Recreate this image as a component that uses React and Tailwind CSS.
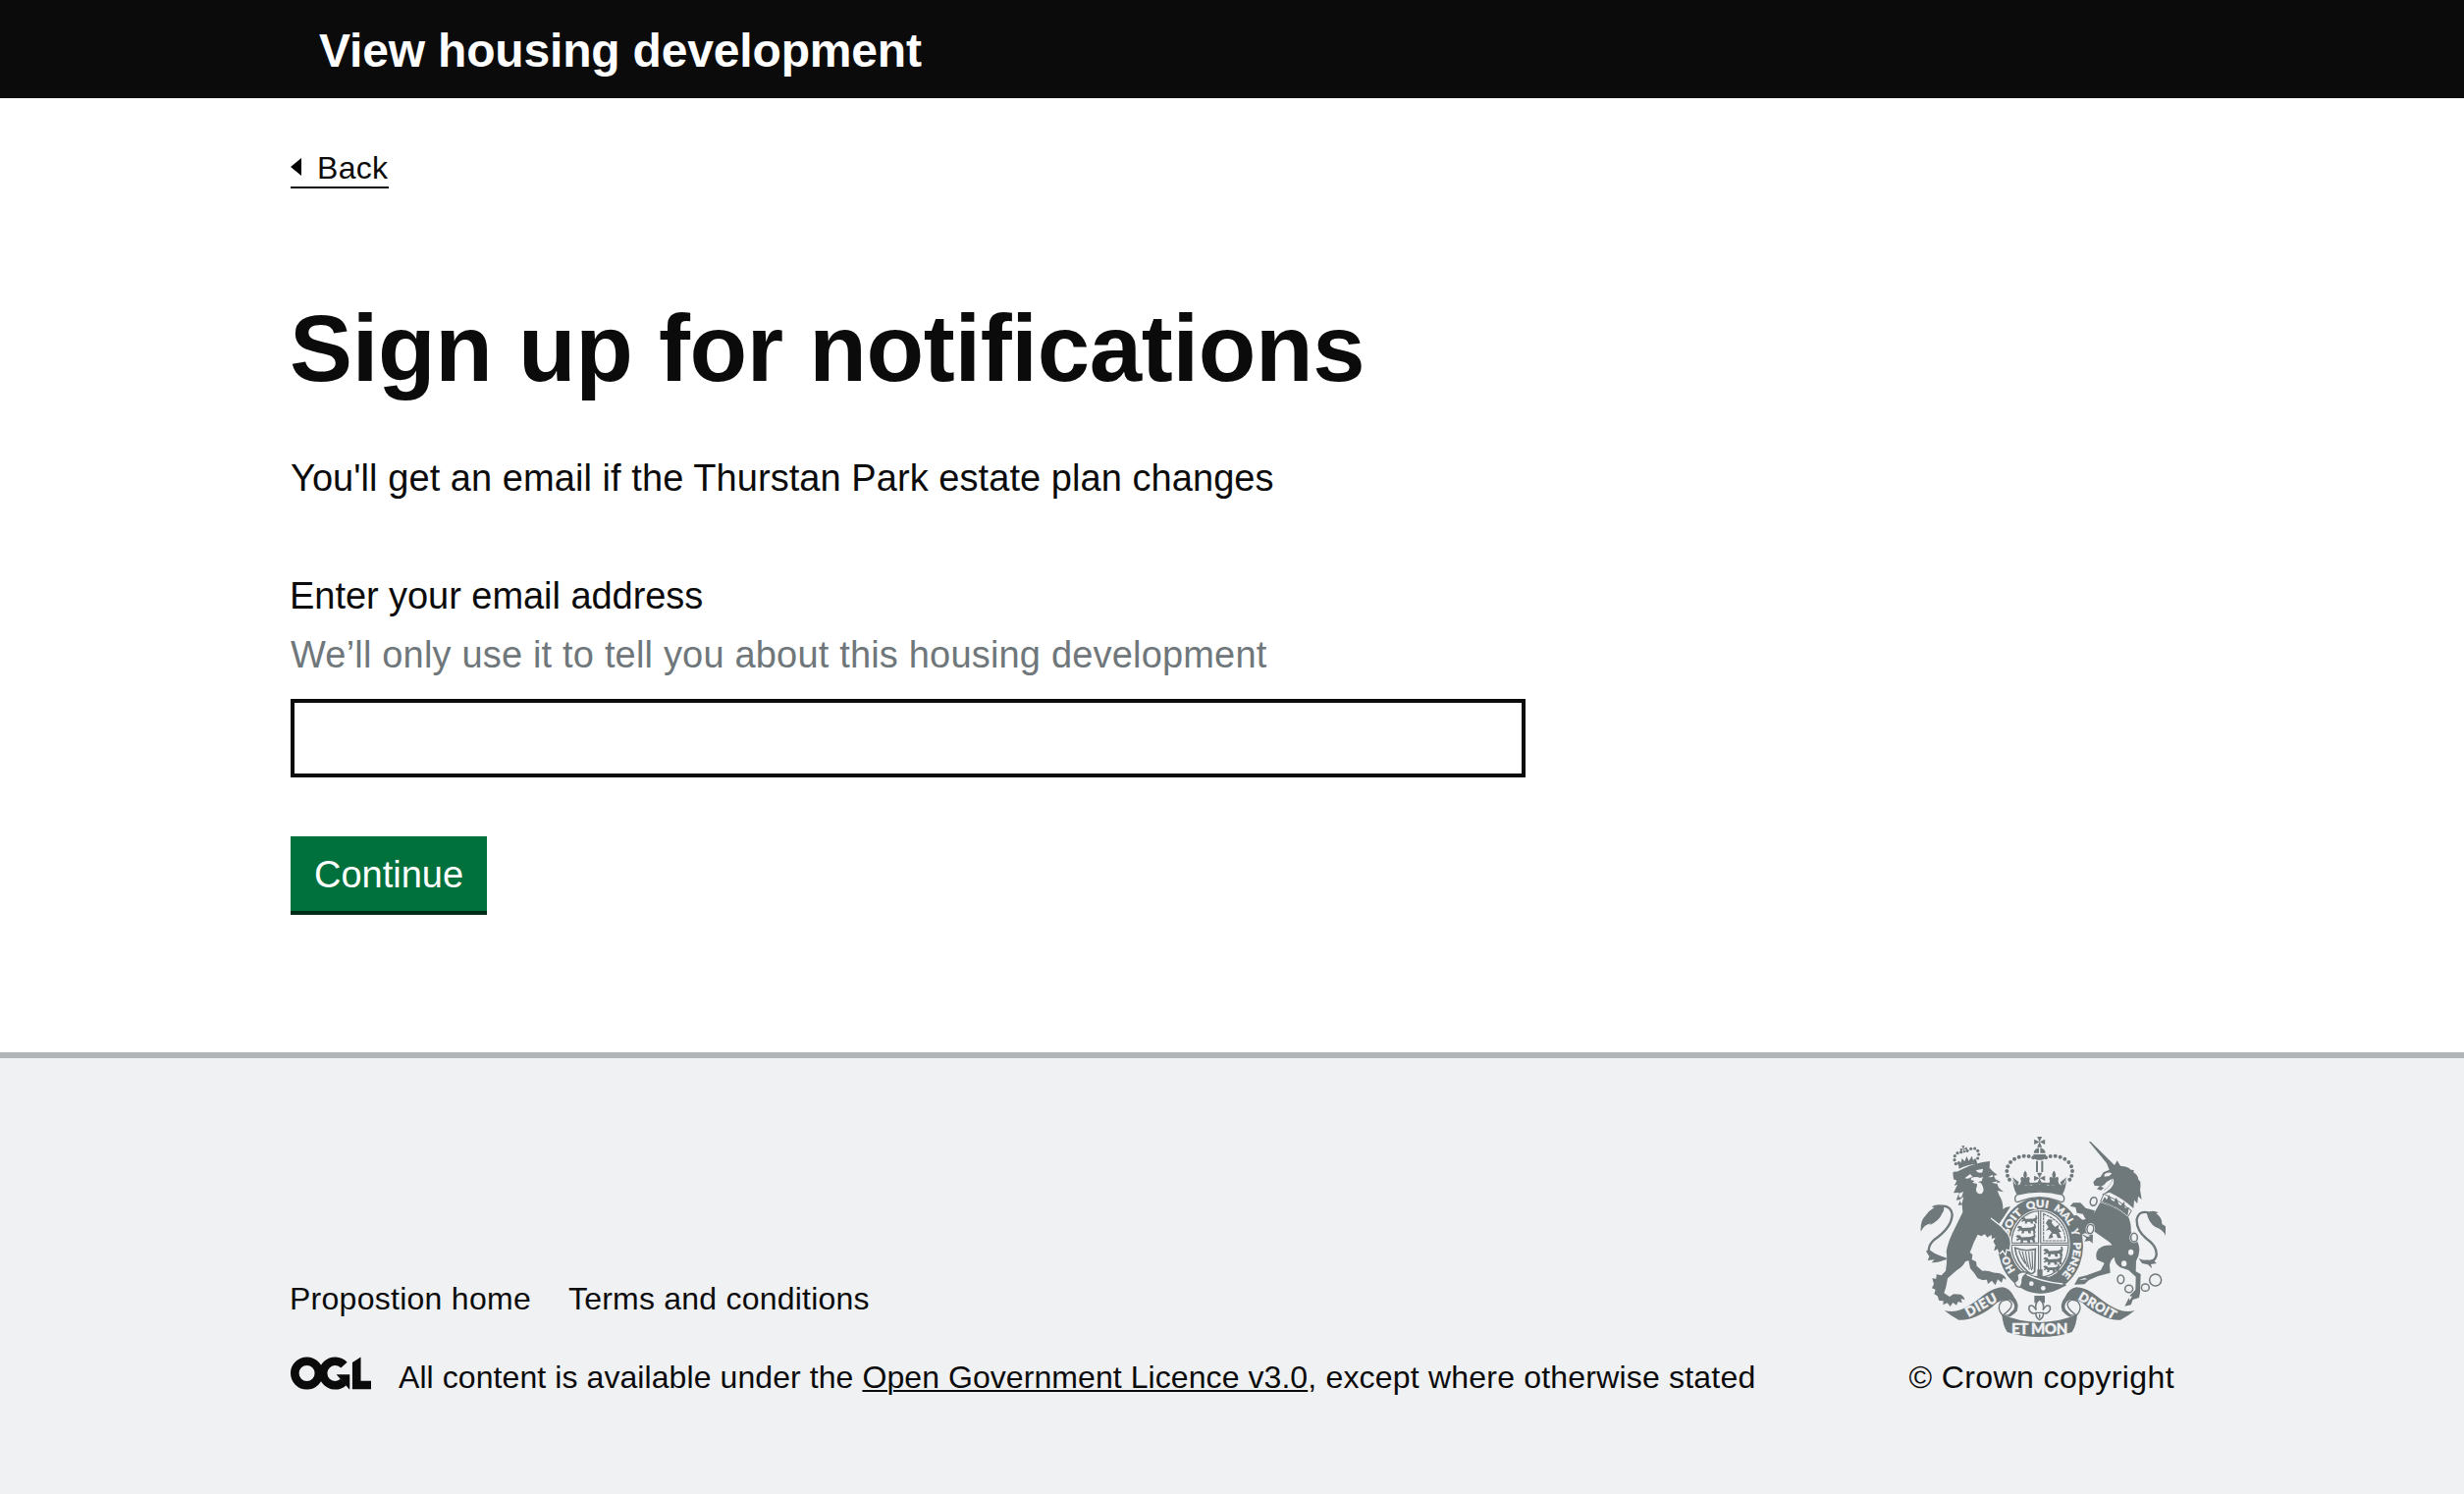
const INK = "#6f787b";
const PAPER = "#f0f1f3";

const MOTTO = [
  ["HO", "16.8%", 50],
  ["SOIT", "35.4%", 82],
  ["QUI", "48.6%", 64],
  ["MAL", "60.8%", 68],
  ["Y", "69.4%", 20],
  ["PENSE", "81.5%", 110],
];

const ARCH = [
  [424, 118], [410, 114], [395, 113], [380, 116], [366, 122], [354, 132],
  [346, 145], [343, 159], [345, 173], [351, 185],
];

const LION_CROWN = [
  [187, 137], [183, 125], [184, 113], [192, 104], [203, 101],
  [222, 97], [233, 91], [245, 90], [254, 97], [257, 108], [254, 120],
];

const LINKS = [
  [608, 252, 10, 13, 15], [598, 336, 10, 14, 10], [732, 362, 10, 13, 0],
  [691, 490, 10, 13, 0], [716, 519, 12, 11, 0], [766, 515, 12, 11, 0],
  [797, 492, 18, 18, 0],
];

const CROSS = "M0 0L-7-15H7L0 0L15-7V7L0 0L7 15H-7L0 0L-15 7V-7Z";
const FLEUR =
  "M0-17C8-8 6-2 3 4C12-4 18 4 13 12L17 22H-17L-13 12C-18 4-12-4-3 4C-6-2-8-8 0-17Z";
const PASSANT =
  "M0 6L5 2L13 4L15 8L40 7L48 3L46-4L51-3L53 5L50 12L52 22H46L44 16L38 15L39 23H32L30 17L20 17L19 23H12L14 17L10 14L4 18L1 14L7 11Z";

function Passant({ x, y, s = 1 }) {
  return <path d={PASSANT} transform={`translate(${x} ${y}) scale(${s})`} />;
}

function Lion() {
  return (
    <g>
      {LION_CROWN.map(([x, y]) => (
        <circle key={`${x}-${y}`} cx={x} cy={y} r="4.8" />
      ))}
      <path d={CROSS} transform="translate(211 92) rotate(-12) scale(.7)" />
      <path d="M190 133L197 128L202 134L206 120L214 130L220 114L227 128L236 113L240 126L247 120L252 133C230 134 214 139 198 147Z" />
      <path d="M197 152Q222 138 253 137L251 131Q220 134 195 146Z" />
      <path d="M178 164Q180 160 190 161L209 152Q245 134 291 129L290 149L300 160L314 171L303 173L308 184L325 193L312 195L318 210L333 223L314 219L320 234Q332 252 331 276Q341 266 354 268L333 300L318 322L345 352Q356 372 352 388L350 400L341 397L338 411L330 400L320 411L315 397L304 402L309 386L302 374L309 362L297 366L296 354L283 362L276 352L265 358L254 353L243 375L230 408L238 414L236 430L249 436L251 449L268 464Q285 462 300 469L322 472Q338 478 341 491L332 486L327 500L315 490L308 508L297 494L285 504L282 491L268 492L254 487L244 472L231 456L226 432L216 436Q208 452 190 462L162 487L157 513L151 532L168 543L180 535L202 536Q214 544 214 553L203 549L206 562L194 558L189 569L178 561L170 573L161 562L148 568L149 556L136 555L131 541L121 535L125 521L114 517L120 504L115 487L127 488L128 475L143 478L156 464Q162 430 158 404Q164 372 184 334L208 285L206 262L194 264L201 246L188 248L197 225L180 226L192 200L182 204L190 188L180 184Z" />
      <path d="M158 428Q118 418 105 404Q102 386 122 368Q174 332 176 292Q173 266 146 266" fill="none" stroke={INK} strokeWidth="7" />
      <path d="M153 264Q128 258 113 268L121 271Q104 280 93 297Q78 310 80 344Q91 322 111 319L106 325Q137 311 145 289Q153 278 150 268ZM96 404L106 420L101 432L122 430L113 439Q146 438 158 426L124 412L104 398Z" />
      <g fill={PAPER}>
        <path d="M206 166L231 168L214 181L224 182L238 176L231 168L206 166ZM248 157L270 152L268 163Q256 168 248 157ZM234 180Q248 174 262 180L270 176L266 190L258 191L252 198L238 195L244 189L233 186Z" />
        <path d="M251 196Q258 191 265 197Q274 212 271 221Q266 232 257 228Q248 224 249 213Q254 206 251 196Z" />
        <path d="M196 228L210 222L203 244L211 237L205 260L199 250L205 238L197 240ZM299 170L286 178L300 177ZM313 190L296 194L312 198Z" />
      </g>
    </g>
  );
}

function LionPaw() {
  return (
    <g>
      <path d="M345 352Q356 372 352 388L350 400L341 397L338 411L330 400L320 411" fill="none" stroke={PAPER} strokeWidth="8" />
      <path d="M300 312L326 330L345 352Q356 372 352 388L350 400L341 397L338 411L330 400L320 411L315 397L304 402L309 386L302 374L309 362L297 345Z" />
      <path d="M294 303L326 328L346 350" fill="none" stroke={PAPER} strokeWidth="4" />
    </g>
  );
}

function Unicorn() {
  return (
    <g>
      <path d="M593 68L600 70L672 141L680 127L690 143Q714 145 722 155L731 156L730 163Q744 172 745 185L751 192Q752 210 750 216L755 246L744 236L742 258L732 248L730 273Q700 244 657 224L634 232L640 217Q664 200 665 182L648 192Q640 204 630 207L640 210L631 218L618 214L627 205L611 204L607 193L617 181L629 177L638 163L656 155L648 135Z" />
      <path d="M641 169Q652 160 664 166L656 174L641 176ZM668 181Q674 198 660 212L645 224L634 230L637 220Q662 206 668 181Z" fill={PAPER} />
      <path d="M639 229Q684 246 724 280L712 300Q676 266 629 252Z" fill={PAPER} stroke={INK} strokeWidth="3" />
      <path d="M634 252L642 238L648 247L655 232L662 247L670 252L678 240L685 260L692 264L702 252L704 272L716 270L712 296Q676 264 634 252Z" />
      <path d="M628 255Q676 268 716 302Q724 324 722 344L735 362Q747 378 748 400Q748 418 738 434L737 466L752 474L750 530L747 546L728 552L722 568L703 572L720 538L736 522L737 482L715 462L690 454Q670 440 672 422Q660 428 657 446L659 470L622 480L594 492L580 505L549 506L562 484L586 478L630 462L641 440L618 430Q612 412 622 398Q638 384 664 386Q662 378 642 366L612 345L601 330L584 330L594 347L606 354L605 380L596 372L580 374L586 364L568 350L560 330L555 306L536 300L556 293L574 308L584 306L575 290L557 287L553 270L536 266L546 256L568 256L584 272L612 280L608 290Z" />
      <g fill={PAPER}>
        <path d="M573 352L584 349L598 357L590 360ZM713 540L726 542L718 554ZM564 492L580 486L590 490Z" />
        <ellipse cx="722" cy="407" rx="8" ry="9" />
        <ellipse cx="701" cy="442" rx="8" ry="9" />
      </g>
      {LINKS.map(([x, y, rx, ry, a]) => (
        <g key={`${x}-${y}`} transform={`translate(${x} ${y}) rotate(${a})`}>
          <ellipse rx={rx + 4} ry={ry + 4} fill={PAPER} />
          <ellipse rx={rx} ry={ry} fill={PAPER} stroke={INK} strokeWidth="4.5" />
        </g>
      ))}
      <path d="M780 288Q748 276 740 306Q738 340 770 366Q806 392 799 420Q792 440 768 434" fill="none" stroke={INK} strokeWidth="7" />
      <path d="M770 286Q790 277 806 286L799 289Q818 300 817 321L828 328V356Q820 338 797 330Q776 318 770 286ZM746 426L756 441L774 445L787 457L783 444L801 441L793 434L804 412L792 428Q768 436 746 426Z" />
    </g>
  );
}

function Crown() {
  return (
    <g>
      <path d={CROSS} transform="translate(443 70) scale(1.1)" />
      <path d="M425 104Q427 91 441 88V104ZM461 104Q459 91 445 88V104ZM424 108H462Q462 122 450 125H436Q424 122 424 108Z" />
      <path d="M435 128V162M451 128V162" fill="none" stroke={INK} strokeWidth="6" />
      {ARCH.flatMap(([x, y]) => [x, 886 - x].map((cx) => <circle key={`${cx}-${y}`} cx={cx} cy={y} r="6" />))}
      <path d={CROSS} transform="translate(443 181) scale(1.12)" />
      <path d={FLEUR} transform="translate(399 176) scale(.95 1.1)" />
      <path d={FLEUR} transform="translate(487 176) scale(.95 1.1)" />
      <path d="M360 178L380 193L374 206ZM526 178L506 193L512 206Z" />
      <path d="M362 182Q366 208 382 200Q392 196 399 204Q410 198 418 203Q430 192 443 200Q456 192 468 203Q476 198 487 204Q494 196 504 200Q520 208 524 182Q526 206 513 230Q443 212 373 230Q360 206 362 182Z" />
      <path d="M380 203Q443 190 506 203" fill="none" stroke={INK} strokeWidth="6" />
      <path d="M374 231Q443 213 512 231Q522 240 516 252Q508 256 500 250Q443 228 386 250Q378 256 370 252Q364 240 374 231Z" fill={PAPER} stroke={INK} strokeWidth="4" />
    </g>
  );
}

function Garter() {
  return (
    <g>
      <ellipse cx="446" cy="386" rx="134" ry="151" fill={PAPER} />
      <ellipse cx="446" cy="386" rx="130" ry="147" />
      <ellipse cx="444" cy="382" rx="92" ry="106" fill={PAPER} />
      <ellipse cx="444" cy="382" rx="87" ry="101" fill={PAPER} stroke={INK} strokeWidth="4" />
      <path d="M443 280V486M357 382H531" fill="none" stroke={INK} strokeWidth="10" />
      <path d="M443 280V480M357 382H531" fill="none" stroke={PAPER} strokeWidth="3" />
      <Passant x={386} y={298} s={0.95} />
      <Passant x={374} y={324} s={1.1} />
      <Passant x={370} y={352} s={1.15} />
      <Passant x={454} y={394} s={1.15} />
      <Passant x={454} y={420} s={1.1} />
      <Passant x={454} y={446} s={0.95} />
      <path d="M455 290V372H521Q522 316 455 290Z" fill="none" stroke={INK} strokeWidth="3.5" strokeDasharray="9 2" />
      <path d="M462 318L470 306L482 308L480 318L490 330L503 322L500 334L510 344L502 346L510 364H498L494 352L482 350L484 362L470 366L473 356L480 346L472 338L462 342L470 330Z" />
      <path d="M368 394Q396 406 430 398L428 466Q420 478 408 468Q372 436 368 394Z" fill="none" stroke={INK} strokeWidth="5" />
      <path d="M380 402Q388 428 400 442M390 404Q396 432 406 452M400 405Q404 436 412 460M410 405Q412 438 419 462M420 404L422 458" fill="none" stroke={INK} strokeWidth="3.5" />
      <path d="M436 460H452V482H468V490H425V482H436Z" />
      <path id="motto" d="M446 503A101 116.5 0 0 1 446 270A101 116.5 0 0 1 446 503" fill="none" />
      <g fill={PAPER} stroke={PAPER} strokeWidth="1.2" className="font-['Lato'] font-black" fontSize="31" textAnchor="middle">
        {MOTTO.map(([word, at, len]) => (
          <text key={word} textLength={len} lengthAdjust="spacingAndGlyphs">
            <textPath href="#motto" startOffset={at} textLength={len} lengthAdjust="spacingAndGlyphs">{word}</textPath>
          </text>
        ))}
      </g>
      <path d="M396 474Q440 500 512 500L526 508Q480 534 440 532Q404 526 380 508Z" />
      <path d="M398 472Q440 496 514 504" fill="none" stroke={PAPER} strokeWidth="4" />
      <circle cx="418" cy="503" r="7" fill={PAPER} />
      <circle cx="454" cy="517" r="7" fill={PAPER} />
      <path d="M374 478Q384 462 408 470Q392 478 390 490Q392 502 384 514Q366 512 368 498Q382 492 374 478Z" fill={PAPER} stroke={INK} strokeWidth="4" />
    </g>
  );
}

function RibbonSide() {
  return (
    <g>
      <path d="M152 585Q180 592 204 582Q232 570 262 546Q300 514 330 514Q352 516 366 545Q382 566 374 584Q366 600 344 606Q352 592 364 582Q372 562 350 552Q330 550 312 562Q284 590 252 602Q222 616 196 614Q172 602 152 585Z" />
      <path d="M326 558Q310 578 330 600Q350 586 356 574Q362 560 346 553Q334 552 326 558Z" fill={PAPER} stroke={INK} strokeWidth="4" />
      <path d="M328 598Q346 606 374 584" fill="none" stroke={INK} strokeWidth="4" />
    </g>
  );
}

function Ribbon() {
  return (
    <g>
      <RibbonSide />
      <g transform="translate(886 0) scale(-1 1)">
        <RibbonSide />
      </g>
      <path d="M328 597Q380 620 443 621Q506 620 558 597Q556 630 542 651Q500 666 443 666Q386 666 344 651Q330 630 328 597Z" />
      <g fill={PAPER} stroke={PAPER} strokeWidth="1.2" className="font-['Lato'] font-black" textAnchor="middle">
        <text x="0" y="0" fontSize="41" transform="translate(271 581) rotate(-29)" textLength="104">DIEU</text>
        <text x="443" y="656" fontSize="45" textLength="172">ET MON</text>
        <text x="0" y="0" fontSize="39" transform="translate(613 582) rotate(30)" textLength="126">DROIT</text>
      </g>
      <path d="M427 540H459V562H427Z" />
      <path d="M443 550Q460 566 453 584Q464 564 474 572Q480 586 464 594H454Q456 606 443 614Q430 606 432 594H422Q406 586 412 572Q422 564 433 584Q426 566 443 550Z" fill={PAPER} stroke={INK} strokeWidth="4.5" />
      <path d="M430 592H456M443 596V608" fill="none" stroke={INK} strokeWidth="4" />
    </g>
  );
}

function Crest() {
  return (
    <svg viewBox="78 54 750 612" className="mr-2 block h-[204px] w-[250px]" fill={INK} role="img">
      <Lion />
      <Garter />
      <LionPaw />
      <Crown />
      <Unicorn />
      <Ribbon />
    </svg>
  );
}

function OglLogo() {
  return (
    <svg viewBox="0 0 483.2 195.7" className="-mt-px mr-[28px] block h-[34px] w-[82px]" fill="#0b0b0b" role="img">
      <circle cx="97.8" cy="97.8" r="72.4" fill="none" stroke="#0b0b0b" strokeWidth="50.7" />
      <path d="M321 49A72.4 72.4 0 1 0 317 151" fill="none" stroke="#0b0b0b" strokeWidth="50.7" />
      <polygon points="275.1,105.6 355.1,105.6 355.1,193.4 352.1,193.4" />
      <polygon points="421.5,142.8 421.5,0.1 370.8,32.4 370.8,193.5 483.2,193.5 483.2,142.8" />
    </svg>
  );
}

export default function App() {
  return (
    <div className="min-h-[1522px] bg-white font-['Liberation_Sans',Arial,sans-serif] text-[#0b0b0b]">
      <header className="flex h-[100px] items-center bg-[#0b0b0b] pl-[325px] pt-[3px]">
        <span className="text-5xl font-bold tracking-[-0.17px] text-white">View housing development</span>
      </header>

      <main className="flex h-[972px] flex-col items-start pl-[296px] pt-[51px]">
        <a className="flex items-center border-b-2 border-[#0b0b0b] text-[32px] leading-[39px]">
          <svg viewBox="0 0 11 20" className="mb-0.5 mr-4 block h-[18px] w-[11px]" preserveAspectRatio="none">
            <polygon points="11,0 11,20 0,10" />
          </svg>
          <span className="h-[39px] w-[73px] pt-px leading-[39px] tracking-[0.3px]">Back</span>
        </a>

        <h1 className="-ml-px mt-[113px] text-[96px] font-bold leading-[100px] tracking-[-0.34px]">
          Sign up for notifications
        </h1>
        <p className="mt-[57px] text-[38px] leading-[50px] tracking-[0.06px]">
          You'll get an email if the Thurstan Park estate plan changes
        </p>

        <label className="-ml-px mt-[70px] text-[38px] leading-[50px] tracking-[-0.05px]" htmlFor="email">
          Enter your email address
        </label>
        <p className="mt-2.5 text-[38px] leading-[50px] tracking-[0.18px] text-[#6f777b]">
          We’ll only use it to tell you about this housing development
        </p>
        <input id="email" type="text" className="mt-5 h-20 w-[1258px] border-4 border-[#0b0b0b]" />

        <button className="mt-[60px] h-20 w-[200px] border-b-4 border-[#002d18] bg-[#00703c] pt-px text-center text-[38px] leading-[50px] text-white">
          Continue
        </button>
      </main>

      <footer className="flex h-[450px] items-start justify-between border-t-[6px] border-[#b1b4b6] bg-[#f0f1f3] pl-[296px] pr-[296px] pt-20 text-[32px] leading-10">
        <div className="pt-[145px]">
          <nav className="flex">
            <a className="-ml-px w-[284px] tracking-[0.27px]">Propostion home</a>
            <a className="tracking-[0.22px]">Terms and conditions</a>
          </nav>
          <div className="mt-10 flex items-start">
            <OglLogo />
            <p className="whitespace-nowrap tracking-[0.08px]">
              All content is available under the{" "}
              <a className="tracking-[0.07px] underline decoration-2 underline-offset-[2px]">Open Government Licence v3.0</a>
              <span className="tracking-[0.2px]">, except where otherwise stated</span>
            </p>
          </div>
        </div>
        <div className="flex flex-col items-end">
          <Crest />
          <p className="-mr-px mt-[21px] whitespace-nowrap tracking-[0.4px]">© Crown copyright</p>
        </div>
      </footer>
    </div>
  );
}
